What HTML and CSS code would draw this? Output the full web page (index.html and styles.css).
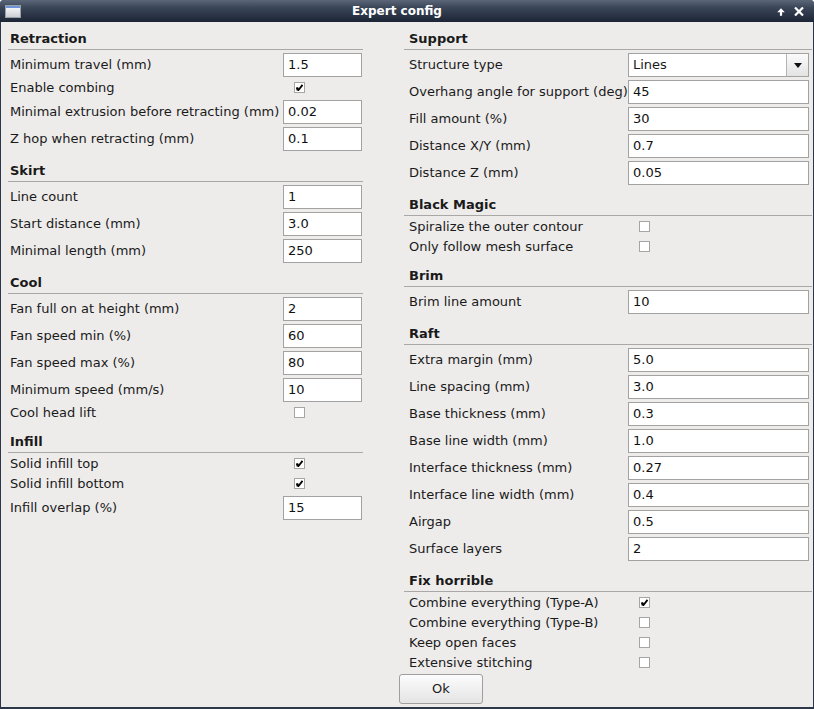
FILE: index.html
```html
<!DOCTYPE html>
<html>
<head>
<meta charset="utf-8">
<title>Expert config</title>
<link rel="stylesheet" href="styles.css">
</head>
<body>
<div class="window">
  <div class="titlebar">
    <div class="tb-left">
      <svg class="win-icon" width="16" height="13" viewBox="0 0 16 13">
        <defs><linearGradient id="wg" x1="0" y1="0" x2="0" y2="1"><stop offset="0" stop-color="#ffffff"/><stop offset="1" stop-color="#c9ccd2"/></linearGradient></defs>
        <rect x="0.5" y="0.5" width="15" height="12" fill="url(#wg)" stroke="#9aa0aa"/>
        <rect x="1" y="1" width="14" height="2" fill="#6f93d9"/>
      </svg>
    </div>
    <div class="tb-title">Expert config</div>
    <div class="tb-right">
      <svg width="8" height="8" viewBox="0 0 8 8"><path d="M4 0.3 L7.8 4.2 L5.1 4.2 L5.1 7.8 L2.9 7.8 L2.9 4.2 L0.2 4.2 Z" fill="#fff"/></svg>
      <svg width="10" height="9" viewBox="0 0 10 9"><path d="M1 0.5 L9 8.5 M9 0.5 L1 8.5" stroke="#fff" stroke-width="2.2"/></svg>
    </div>
  </div>
  <div class="content">
    <div class="col col-left">
      <section class="group first">
        <div class="group-title">Retraction</div>
        <div class="grid">
          <span class="lbl">Minimum travel (mm)</span><div class="val"><div class="input">1.5</div></div>
          <span class="lbl cbl">Enable combing</span><div class="val cbcell"><span class="cb checked"></span></div>
          <span class="lbl">Minimal extrusion before retracting (mm)</span><div class="val"><div class="input">0.02</div></div>
          <span class="lbl">Z hop when retracting (mm)</span><div class="val"><div class="input">0.1</div></div>
        </div>
      </section>
      <section class="group">
        <div class="group-title">Skirt</div>
        <div class="grid">
          <span class="lbl">Line count</span><div class="val"><div class="input">1</div></div>
          <span class="lbl">Start distance (mm)</span><div class="val"><div class="input">3.0</div></div>
          <span class="lbl">Minimal length (mm)</span><div class="val"><div class="input">250</div></div>
        </div>
      </section>
      <section class="group">
        <div class="group-title">Cool</div>
        <div class="grid">
          <span class="lbl">Fan full on at height (mm)</span><div class="val"><div class="input">2</div></div>
          <span class="lbl">Fan speed min (%)</span><div class="val"><div class="input">60</div></div>
          <span class="lbl">Fan speed max (%)</span><div class="val"><div class="input">80</div></div>
          <span class="lbl">Minimum speed (mm/s)</span><div class="val"><div class="input">10</div></div>
          <span class="lbl cbl">Cool head lift</span><div class="val cbcell"><span class="cb"></span></div>
        </div>
      </section>
      <section class="group">
        <div class="group-title">Infill</div>
        <div class="grid">
          <span class="lbl cbl">Solid infill top</span><div class="val cbcell"><span class="cb checked"></span></div>
          <span class="lbl cbl">Solid infill bottom</span><div class="val cbcell"><span class="cb checked"></span></div>
          <span class="lbl">Infill overlap (%)</span><div class="val"><div class="input">15</div></div>
        </div>
      </section>
    </div>
    <div class="col col-right">
      <section class="group first">
        <div class="group-title">Support</div>
        <div class="grid">
          <span class="lbl">Structure type</span><div class="val"><div class="select"><span class="sel-text">Lines</span><span class="sel-btn"><span class="tri"></span></span></div></div>
          <span class="lbl">Overhang angle for support (deg)</span><div class="val"><div class="input">45</div></div>
          <span class="lbl">Fill amount (%)</span><div class="val"><div class="input">30</div></div>
          <span class="lbl">Distance X/Y (mm)</span><div class="val"><div class="input">0.7</div></div>
          <span class="lbl">Distance Z (mm)</span><div class="val"><div class="input">0.05</div></div>
        </div>
      </section>
      <section class="group">
        <div class="group-title">Black Magic</div>
        <div class="grid">
          <span class="lbl cbl">Spiralize the outer contour</span><div class="val cbcell"><span class="cb"></span></div>
          <span class="lbl cbl">Only follow mesh surface</span><div class="val cbcell"><span class="cb"></span></div>
        </div>
      </section>
      <section class="group">
        <div class="group-title">Brim</div>
        <div class="grid">
          <span class="lbl">Brim line amount</span><div class="val"><div class="input">10</div></div>
        </div>
      </section>
      <section class="group">
        <div class="group-title">Raft</div>
        <div class="grid">
          <span class="lbl">Extra margin (mm)</span><div class="val"><div class="input">5.0</div></div>
          <span class="lbl">Line spacing (mm)</span><div class="val"><div class="input">3.0</div></div>
          <span class="lbl">Base thickness (mm)</span><div class="val"><div class="input">0.3</div></div>
          <span class="lbl">Base line width (mm)</span><div class="val"><div class="input">1.0</div></div>
          <span class="lbl">Interface thickness (mm)</span><div class="val"><div class="input">0.27</div></div>
          <span class="lbl">Interface line width (mm)</span><div class="val"><div class="input">0.4</div></div>
          <span class="lbl">Airgap</span><div class="val"><div class="input">0.5</div></div>
          <span class="lbl">Surface layers</span><div class="val"><div class="input">2</div></div>
        </div>
      </section>
      <section class="group">
        <div class="group-title">Fix horrible</div>
        <div class="grid">
          <span class="lbl cbl">Combine everything (Type-A)</span><div class="val cbcell"><span class="cb checked"></span></div>
          <span class="lbl cbl">Combine everything (Type-B)</span><div class="val cbcell"><span class="cb"></span></div>
          <span class="lbl cbl">Keep open faces</span><div class="val cbcell"><span class="cb"></span></div>
          <span class="lbl cbl">Extensive stitching</span><div class="val cbcell"><span class="cb"></span></div>
        </div>
      </section>
      <div class="footer"><button class="ok">Ok</button></div>
    </div>
  </div>
</div>
</body>
</html>
```
FILE: styles.css
```css
* { box-sizing: border-box; }
html, body { margin: 0; padding: 0; }
body {
  width: 814px;
  height: 709px;
  overflow: hidden;
  background: #ffffff;
  font-family: "DejaVu Sans", "Noto Sans", sans-serif;
  font-size: 13px;
  color: #1a1a1a;
}
.window {
  width: 814px;
  height: 709px;
  display: flex;
  flex-direction: column;
  background: #2c384a;
  border-radius: 4px 4px 0 0;
}
.titlebar {
  height: 22px;
  flex: none;
  display: flex;
  align-items: center;
  background: linear-gradient(#5b6678 0%, #3a4558 35%, #1c2535 100%);
  border-radius: 4px 4px 0 0;
  color: #fff;
}
.tb-left { width: 24px; padding-left: 5px; display: flex; align-items: center; }
.win-icon { display: block; margin-top: 1px; }
.tb-title {
  flex: 1;
  text-align: center;
  font-weight: bold;
  font-size: 12px;
  color: #ffffff;
}
.tb-right {
  width: 44px;
  display: flex;
  align-items: center;
  gap: 9px;
  padding-left: 7px;
  padding-top: 1px;
}
.content {
  flex: 1;
  margin: 0 1px 2px 1px;
  background: #edeceb;
  display: flex;
  padding-left: 7px;
  gap: 41px;
  overflow: hidden;
}
.col { display: flex; flex-direction: column; }
.col-left { width: 355px; }
.col-right { width: 408px; }
.group-title {
  font-weight: bold;
  font-size: 13px;
  line-height: 18px;
  padding-top: 11px;
  padding-bottom: 1px;
  border-bottom: 1px solid #a9a8a6;
  margin-bottom: 3px;
}
.group.first .group-title { padding-top: 8px; }
.grid {
  display: grid;
  row-gap: 3px;
  align-items: center;
}
.col-left .grid { grid-template-columns: 275px 79px; }
.col-right .grid { grid-template-columns: 224px 181px; }
.col-left .group-title, .col-left .lbl { padding-left: 2px; }
.col-right .group-title, .col-right .lbl { padding-left: 5px; }
.lbl { white-space: nowrap; line-height: 16px; }
.lbl.cbl { line-height: 14px; padding-bottom: 2px; }
.val { display: flex; align-items: center; }
.input {
  width: 100%;
  height: 24px;
  border: 1px solid #a2a2a2;
  background: #ffffff;
  padding-left: 4px;
  line-height: 22px;
  color: #111;
}
.cbcell { height: 17px; padding-bottom: 2px; }
.cb {
  display: block;
  width: 11px;
  height: 11px;
  margin-left: 11px;
  border: 1px solid #a5a5a5;
  background: #ffffff;
  position: relative;
}
.cb.checked::after {
  content: "";
  position: absolute;
  left: 1px;
  top: 1px;
  width: 7px;
  height: 7px;
  background: no-repeat center/7px 7px url("data:image/svg+xml;utf8,<svg xmlns='http://www.w3.org/2000/svg' width='7' height='7' viewBox='0 0 7 7'><path d='M0.5 3.5 L2.5 6 L6.5 0.8' stroke='black' stroke-width='1.8' fill='none'/><rect x='0.5' y='3.5' width='2' height='3' fill='black'/></svg>");
}
.select {
  width: 100%;
  height: 24px;
  border: 1px solid #a2a2a2;
  background: #ffffff;
  display: flex;
}
.sel-text { flex: 1; padding-left: 4px; line-height: 22px; }
.sel-btn {
  width: 22px;
  border-left: 1px solid #b4b4b4;
  background: linear-gradient(#fbfbfb, #e3e3e3);
  display: flex;
  align-items: center;
  justify-content: center;
}
.tri {
  width: 0;
  height: 0;
  border-left: 4px solid transparent;
  border-right: 4px solid transparent;
  border-top: 5px solid #111;
}
.footer { margin-top: 2px; margin-left: -5px; }
.ok {
  width: 84px;
  height: 30px;
  border: 1px solid #9f9f9f;
  border-radius: 3px;
  background: linear-gradient(#fcfcfc, #e4e4e4);
  font-family: "DejaVu Sans", sans-serif;
  font-size: 13px;
  color: #1a1a1a;
  padding: 0 0 2px 0;
}
```
